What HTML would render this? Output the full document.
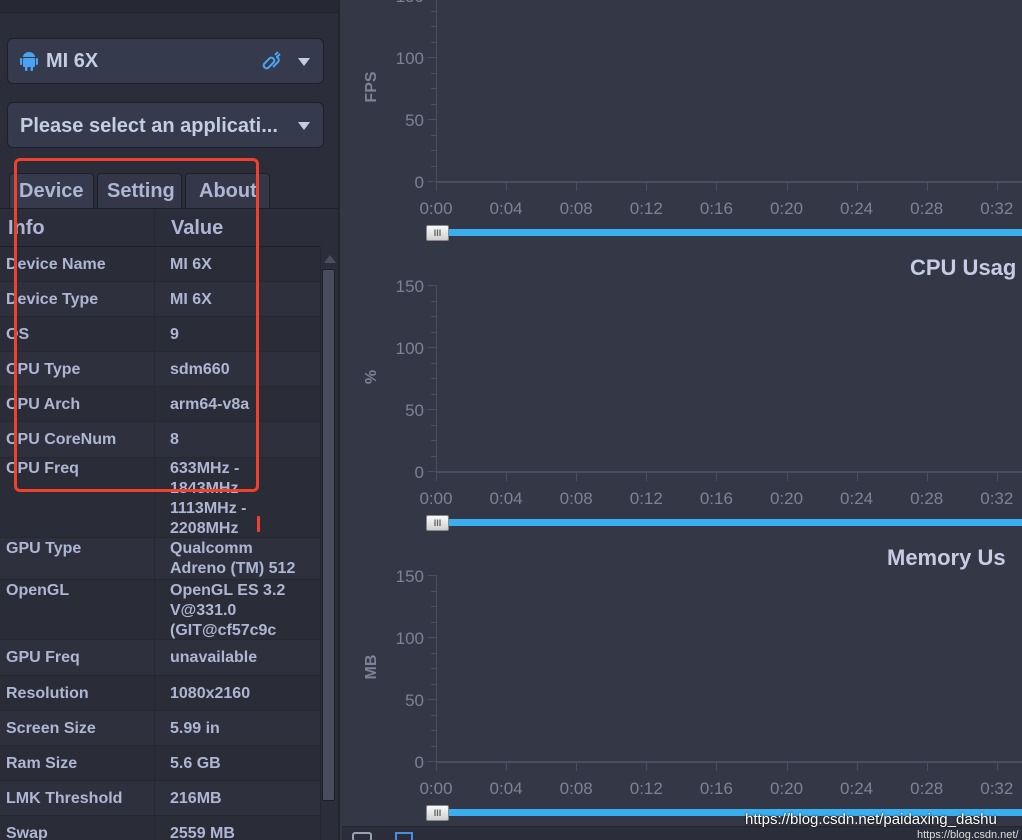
<!DOCTYPE html>
<html style="overflow:hidden;width:1022px;height:840px"><head><meta charset="utf-8"><style>
*{margin:0;padding:0;box-sizing:border-box}
body{width:1022px;height:840px;overflow:hidden;background:#343746;font-family:"Liberation Sans",sans-serif;position:relative}
.a{position:absolute}
#left{left:0;top:0;width:340px;height:840px;background:#2b2e3a;border-right:2px solid #23252f;overflow:hidden}
.dd{left:7px;width:317px;height:46px;border:1px solid #1e2029;border-radius:6px;background:#353a4d;color:#c5cce4;font-size:20px;font-weight:bold}
.tab{top:173px;height:36px;border:1px solid #1e2029;border-bottom:none;border-radius:4px 4px 0 0;background:#333748;color:#aeb6d3;font-size:20px;font-weight:bold;padding:6px 0 0 9px}
.row{left:0;width:320px;border-bottom:1px solid #252731;color:#aeb6d3;font-size:16px;font-weight:bold;line-height:20px}
.row .k{position:absolute;left:6px;top:7px}
.row .v{position:absolute;left:170px;top:7px;width:150px}
.row:after{content:"";position:absolute;left:154px;top:0;bottom:0;width:1px;background:#252731}
.yl{color:#7d8296;font-size:17px;text-align:right;width:40px}
.xl{color:#7d8296;font-size:17px;width:50px;text-align:center}
.tk{background:#4a4e60}
</style></head><body>
<div id="left" class="a">
<div class="a" style="left:0;top:0;width:340px;height:13px;background:#262833;border-bottom:1px solid #1e2029"></div>
<div class="a dd" style="top:38px">
 <svg class="a" style="left:12px;top:12px" width="18" height="20" viewBox="0 0 18 20"><rect x="3" y="7" width="12" height="9" rx="1" fill="#4aa3f0"/><path d="M3 6a6 5 0 0 1 12 0z" fill="#4aa3f0"/><rect x="0" y="7" width="2.2" height="7" rx="1" fill="#4aa3f0"/><rect x="15.8" y="7" width="2.2" height="7" rx="1" fill="#4aa3f0"/><rect x="5" y="15" width="2.5" height="5" rx="1" fill="#4aa3f0"/><rect x="10.5" y="15" width="2.5" height="5" rx="1" fill="#4aa3f0"/></svg>
 <span class="a" style="left:38px;top:11px">MI 6X</span>
 <svg class="a" style="left:252px;top:11px" width="24" height="24" viewBox="0 0 24 24" fill="none" stroke="#4aa3f0" stroke-width="2"><path d="M4 14l6-6a3 3 0 0 1 4 4l-6 6a3 3 0 0 1-4-4z"/><path d="M13 17l5-5a3 3 0 0 0-2-5"/><path d="M15 5l3-3M17 7l3-3"/></svg>
 <div class="a" style="left:290px;top:19px;border-left:6px solid transparent;border-right:6px solid transparent;border-top:8px solid #c5cce4"></div>
</div>
<div class="a dd" style="top:102px">
 <span class="a" style="left:12px;top:12px">Please select an applicati...</span>
 <div class="a" style="left:290px;top:19px;border-left:6px solid transparent;border-right:6px solid transparent;border-top:8px solid #c5cce4"></div>
</div>
<div class="a tab" style="left:9px;width:85px;background:#353a4d">Device</div>
<div class="a tab" style="left:97px;width:85px">Setting</div>
<div class="a tab" style="left:185px;width:85px;padding-left:13px">About</div>
<div class="a" style="left:0;top:208px;width:340px;height:1px;background:#1e2029"></div>
<div class="a row" style="top:209px;height:38px;background:#2b2e3a;font-size:20px;border-bottom:1px solid #1e2029"><span class="k" style="left:8px;top:9px">Info</span><span class="v" style="left:171px;top:9px">Value</span></div>
<div id="rows"></div>
<div class="a" style="left:320px;top:247px;width:18px;height:593px;background:#2b2e3a;border-left:1px solid #23252f"></div>
<div class="a" style="left:324px;top:255px;border-left:6px solid transparent;border-right:6px solid transparent;border-bottom:8px solid #4a4e60"></div>
<div class="a" style="left:322px;top:269px;width:13px;height:532px;background:#484c5c;border:1px solid #1e2029;border-radius:2px"></div>
</div>
<div class="a" style="left:14px;top:158px;width:245px;height:334px;border:3px solid #f0412c;border-radius:6px"></div>
<div class="a" style="left:257px;top:516px;width:3px;height:16px;background:#f0412c;border-radius:1px"></div>
<div id="charts"></div>
<div class="a" style="left:342px;top:826px;width:680px;height:14px;background:#2b2e3a;border-top:1px solid #23252f"></div>
<div class="a" style="left:352px;top:832px;width:20px;height:10px;border:2px solid #9aa0b0;border-radius:3px"></div>
<div class="a" style="left:395px;top:832px;width:18px;height:10px;border:2px solid #4a90e0"></div>
<div class="a" style="left:745px;top:811px;color:#fff;font-size:15px;text-shadow:0 0 2px #000">https://blog.csdn.net/paidaxing_dashu</div>
<div class="a" style="left:917px;top:829px;color:#ddd;font-size:11px">https://blog.csdn.net/</div>
<script>
var R=[["Device Name","MI 6X",247,35],["Device Type","MI 6X",282,35],["OS","9",317,35],["CPU Type","sdm660",352,35],["CPU Arch","arm64-v8a",387,35],["CPU CoreNum","8",422,36],["CPU Freq","633MHz -<br>1843MHz<br>1113MHz -<br>2208MHz",458,80],["GPU Type","Qualcomm<br>Adreno (TM) 512",538,42],["OpenGL","OpenGL ES 3.2<br>V@331.0<br>(GIT@cf57c9c",580,60],["GPU Freq","unavailable",640,36],["Resolution","1080x2160",676,35],["Screen Size","5.99 in",711,35],["Ram Size","5.6 GB",746,35],["LMK Threshold","216MB",781,35],["Swap","2559 MB",816,35]];
var h="";R.forEach(function(r,i){var t=r[3]>36?1:8;h+='<div class="a row" style="top:'+r[2]+'px;height:'+r[3]+'px;background:'+(i%2?'#2e313d':'#2a2d38')+'"><span class="k" style="top:'+t+'px">'+r[0]+'</span><span class="v" style="top:'+t+'px">'+r[1]+'</span></div>'});
document.getElementById("rows").innerHTML=h;
var C=[[0,"FPS",null],[290,"%","CPU Usag"],[580,"MB","Memory Us"]];h="";
C.forEach(function(c){var o=c[0];
 if(c[2])h+='<div class="a" style="left:'+(c[1]=="%"?910:887)+'px;top:'+(o-35)+'px;color:#c5cce4;font-size:22px;font-weight:bold;white-space:nowrap">'+c[2]+'</div>';
 h+='<div class="a" style="left:356px;top:'+(78+o)+'px;width:32px;transform:rotate(-90deg);color:#7d8296;font-size:16px;font-weight:bold;text-align:center">'+c[1]+'</div>';
 [150,100,50,0].forEach(function(v,i){var y=-5+o+62*i;h+='<div class="a yl" style="left:384px;top:'+(y-8)+'px">'+v+'</div><div class="a tk" style="left:428px;top:'+y+'px;width:8px;height:1px"></div>';for(var k=1;k<4&&i<3;k++)h+='<div class="a tk" style="left:431px;top:'+(y+k*15.5)+'px;width:5px;height:1px"></div>';});
 h+='<div class="a tk" style="left:436px;top:'+(-5+o)+'px;width:1px;height:186px"></div><div class="a tk" style="left:436px;top:'+(181+o)+'px;width:586px;height:2px"></div>';
 for(var j=0;j<9;j++){var x=436+70.1*j,m=Math.floor(j*4/60),s=(j*4)%60;h+='<div class="a tk" style="left:'+x+'px;top:'+(181+o)+'px;width:1px;height:10px"></div><div class="a xl" style="left:'+(x-25)+'px;top:'+(199+o)+'px">'+m+':'+(s<10?'0':'')+s+'</div>';}
 h+='<div class="a" style="left:449px;top:'+(229+o)+'px;width:573px;height:7px;background:#3aaff0"></div><div class="a" style="left:426px;top:'+(225+o)+'px;width:23px;height:16px;background:linear-gradient(#fafafa,#cfcfcf);border:1px solid #888;border-radius:2px;color:#666;font-size:9px;text-align:center;line-height:14px;font-weight:bold">III</div>';
});
document.getElementById("charts").innerHTML=h;
</script>
</body></html>
